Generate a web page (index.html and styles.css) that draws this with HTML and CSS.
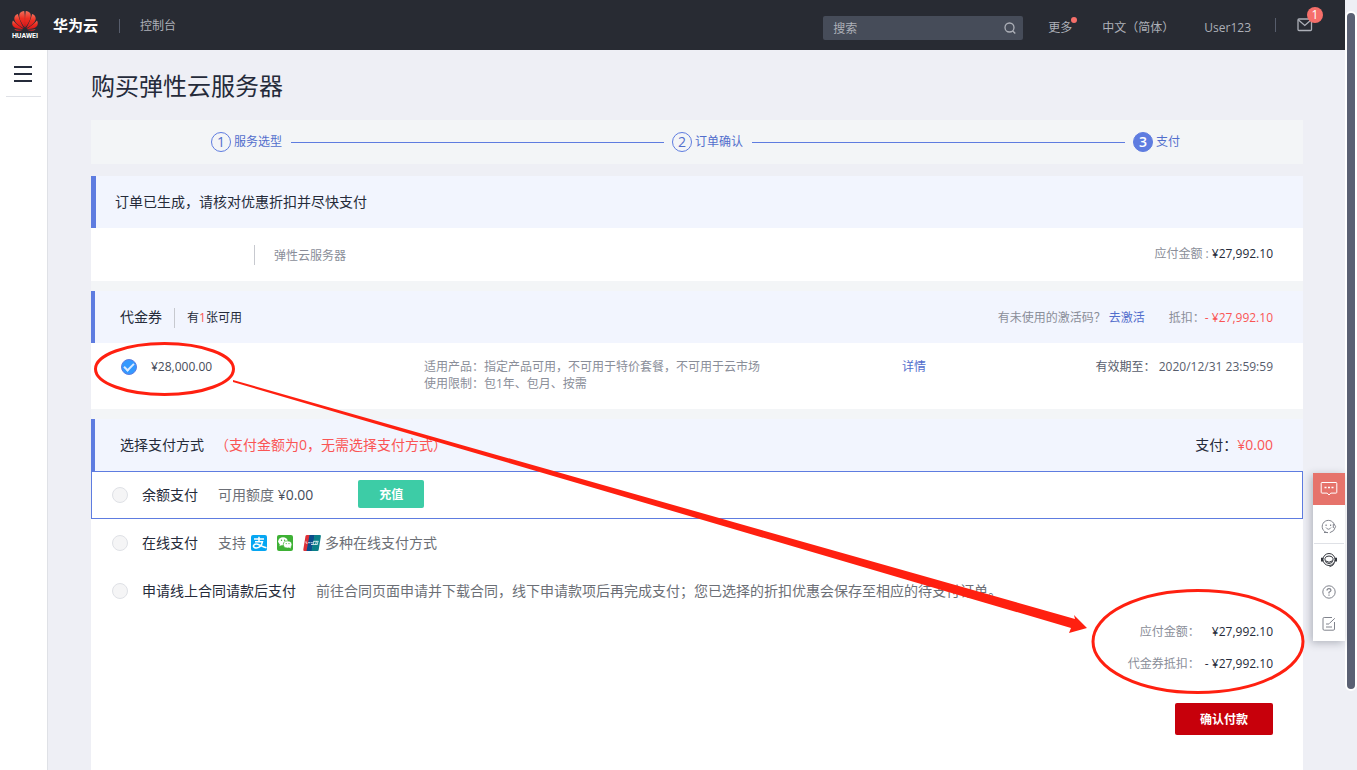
FILE: index.html
```html
<!DOCTYPE html>
<html lang="zh-CN">
<head>
  <meta charset="UTF-8">
  <meta name="viewport" content="width=device-width, initial-scale=1.0">
  <title>购买弹性云服务器 - 华为云</title>
  <link rel="stylesheet" href="styles.css">
</head>
<body>
  <div class="app">
    <header class="topbar">
      <a class="logo" href="#">
        <svg width="28" height="30" viewBox="0 0 28 30" aria-hidden="true">
          <defs>
            <linearGradient id="petal" x1="0" y1="0" x2="0" y2="1">
              <stop offset="0" stop-color="#f2705c"/>
              <stop offset="0.45" stop-color="#ee2f22"/>
              <stop offset="1" stop-color="#d8161a"/>
            </linearGradient>
          </defs>
          <g fill="url(#petal)">
            <path d="M13.700 17.500C9.500 12 7.300 7 8.600 3.500 9.600 1.800 11.300 1.100 13.200 1 14 5 14.200 12 13.700 17.500z"/>
            <path d="M14.300 17.500C18.500 12 20.700 7 19.400 3.500 18.400 1.800 16.700 1.100 14.800 1 14 5 13.800 12 14.300 17.500z"/>
            <path d="M12.800 18.200C7 15.500 3 11.800 3.300 8 3.600 5.800 5.200 4.500 6.900 4 8 9 10.500 14 12.800 18.200z"/>
            <path d="M15.200 18.200C21 15.500 25 11.800 24.700 8 24.400 5.800 22.800 4.500 21.100 4 20 9 17.500 14 15.200 18.200z"/>
            <path d="M12.300 19C7.500 19.200 3.500 18.700 1.800 15.800 .9 13.800 1.100 12 2 10.400 5 13.800 9 16.500 12.300 19z"/>
            <path d="M15.700 19C20.500 19.200 24.500 18.700 26.200 15.800 27.100 13.800 26.900 12 26 10.400 23 13.800 19 16.500 15.700 19z"/>
            <path d="M12 19.700C8.500 21.300 5 21.300 3.200 18.900 6 19.600 9 19.700 12 19.700z"/>
            <path d="M16 19.700C19.500 21.300 23 21.300 24.800 18.900 22 19.600 19 19.700 16 19.700z"/>
          </g>
          <text class="logo-text" x="14" y="28" text-anchor="middle">HUAWEI</text>
        </svg>
        <span class="brand">华为云</span>
      </a>
      <a class="console" href="#">控制台</a>
      <form class="search">
        <input type="text" placeholder="搜索" aria-label="搜索">
        <button type="button" aria-label="开始搜索">
          <svg width="12" height="12" viewBox="0 0 12 12"><circle cx="5.500" cy="5.500" r="4.500"/><path d="M8.500 8.700l2.800 2.800"/></svg>
        </button>
      </form>
      <nav class="topnav">
        <a class="more" href="#">更多</a>
        <a class="lang" href="#">中文（简体）</a>
        <a class="user" href="#">User123</a>
        <a class="mail" href="#" aria-label="消息">
          <svg width="16" height="14" viewBox="0 0 16 14"><rect x="1" y="1" width="13.500" height="11.500" rx="1"/><path d="M1.500 2l6.300 5.500L14 2"/></svg>
          <span class="badge">1</span>
        </a>
      </nav>
    </header>

    <div class="layout">
      <aside class="sidebar">
        <button class="menu-btn" type="button" aria-label="菜单"><span></span><span></span><span></span></button>
      </aside>

      <main class="main">
        <h1>购买弹性云服务器</h1>

        <ol class="steps">
          <li><span class="num">1</span>服务选型</li>
          <li><span class="num">2</span>订单确认</li>
          <li class="current"><span class="num">3</span>支付</li>
        </ol>

        <div class="content">
          <section class="block order">
            <h2 class="block-head">订单已生成，请核对优惠折扣并尽快支付</h2>
            <div class="order-row">
              <span class="product">弹性云服务器</span>
              <span class="amount">应付金额 : <b>¥27,992.10</b></span>
            </div>
          </section>

          <section class="block">
            <div class="block-head">
              <h2>代金券</h2>
              <span class="usable">有<em>1</em>张可用</span>
              <span class="code-tip">有未使用的激活码？ <a href="#">去激活</a></span>
              <span class="deduct">抵扣：<em>- ¥27,992.10</em></span>
            </div>
            <div class="voucher-row">
              <label class="voucher"><input type="checkbox" checked>¥28,000.00</label>
              <p>适用产品：指定产品可用，不可用于特价套餐，不可用于云市场<br>使用限制：包1年、包月、按需</p>
              <div class="expire"><a href="#">详情</a><span>有效期至： 2020/12/31 23:59:59</span></div>
            </div>
          </section>

          <section class="block pay">
            <div class="block-head">
              <h2>选择支付方式</h2>
              <span class="notice">（支付金额为0，无需选择支付方式）</span>
              <span class="total">支付：<em>¥0.00</em></span>
            </div>
            <div class="pay-row active">
              <label><input type="radio" name="pay" disabled>余额支付</label>
              <span class="pay-desc">可用额度 <b>¥0.00</b></span>
              <button class="recharge" type="button">充值</button>
            </div>
            <div class="pay-row">
              <label><input type="radio" name="pay" disabled>在线支付</label>
              <span class="pay-desc">支持</span>
              <span class="pay-icons">
                <svg width="16" height="16" viewBox="0 0 16 16">
                  <rect width="16" height="16" rx="2" fill="#06a6f2"/>
                  <path d="M3 4h10M8 1.800V6.500M4 6.700h7.500c-.5 2.500-2.500 6-6 6.300-2.600.1-3.800-1.700-2.500-3 1.400-1.400 3.700-.9 5.500 0 2 .9 4 2 7 2.800" fill="none" stroke="#fff" stroke-width="1.500"/>
                </svg>
                <svg width="16" height="16" viewBox="0 0 16 16">
                  <rect width="16" height="16" rx="2" fill="#3eb135"/>
                  <ellipse cx="6" cy="6.300" rx="4.800" ry="4" fill="#fff"/>
                  <path d="M3 9l-.6 2.200L5 9.800z" fill="#fff"/>
                  <ellipse cx="10.600" cy="9.500" rx="4.300" ry="3.600" fill="#fff" stroke="#3eb135" stroke-width=".7"/>
                  <path d="M12 12.300l1.800 1.200-.3-2z" fill="#fff"/>
                  <g fill="#3eb135"><circle cx="4.500" cy="5.200" r=".7"/><circle cx="7.600" cy="5.200" r=".7"/><circle cx="9.200" cy="8.600" r=".6"/><circle cx="12" cy="8.600" r=".6"/></g>
                </svg>
                <svg width="18" height="16" viewBox="0 0 18 16">
                  <path d="M4 0h3.500L4.500 16H1.500Q0 16 .3 14.500L2.500 1Q2.800 0 4 0z" fill="#e02f36"/>
                  <path d="M6.500 0h5.500L9 16H3.500z" fill="#0b4d8c"/>
                  <path d="M11.500 0H17q1 0 .9 1L15.700 14.800Q15.500 16 14.500 16H8.500z" fill="#0a7f88"/>
                  <path d="M3 6.300v1.900h1.500M5 7.700h2.500M8 7.700h1.800M10 9.500l1-3.500M12.500 9.500l1-3.500M8 9.500h6.500M10.500 6.300h5M15 6.300L14.200 9.500" stroke="#e8f4f6" stroke-width=".8" fill="none"/>
                </svg>
              </span>
              <span class="pay-desc">多种在线支付方式</span>
            </div>
            <div class="pay-row">
              <label><input type="radio" name="pay" disabled>申请线上合同请款后支付</label>
              <span class="pay-desc">前往合同页面申请并下载合同，线下申请款项后再完成支付；您已选择的折扣优惠会保存至相应的待支付订单。</span>
            </div>
            <div class="summary">
              <dl>
                <dt>应付金额：</dt><dd>¥27,992.10</dd>
                <dt>代金券抵扣：</dt><dd>- ¥27,992.10</dd>
              </dl>
              <button class="confirm" type="button">确认付款</button>
            </div>
          </section>
        </div>
      </main>
    </div>
  </div>

  <div class="scrollbar"><div class="thumb"></div></div>

  <nav class="dock">
    <a class="dock-chat" href="#" aria-label="在线咨询">
      <svg width="18" height="16" viewBox="0 0 18 16"><path d="M2 1.500h14q.8 0 .8.800v9q0 .8-.8.800h-5.200L9 14 7.200 12.100H2q-.8 0-.8-.8v-9q0-.8.8-.8z"/><path d="M4.500 6.500h2M8 6.500h2M11.500 6.500h2" stroke-width="1.600"/></svg>
    </a>
    <a class="dock-smile" href="#" aria-label="评价">
      <svg width="16" height="16" viewBox="0 0 16 16"><path d="M6.500 13.700A6.200 6.200 0 1 1 12.600 4.200L14.600 7.600 12.600 11.600 8.800 13.700M3 13.500h4M12.300 5v4"/><path d="M5 8.500q2.500 3.500 5 0"/><path d="M4.500 6.200h1.200M9 6.200h1.200" stroke-width="1.400"/></svg>
    </a>
    <a href="#" aria-label="客服">
      <svg class="dark" width="18" height="16" viewBox="0 0 18 16"><circle cx="9" cy="7.500" r="6"/><path d="M5 6.500Q5.500 4 9 4t4 2.500V8q-.5 3.500-4 3.500T5 8zM6 9q3 2.500 6 0M14.500 10.500q-1 3.500-5 4.200"/><path d="M2 5.800v3.600M16 5.800v3.600" stroke-width="2"/></svg>
    </a>
    <a href="#" aria-label="帮助">
      <svg width="16" height="16" viewBox="0 0 16 16"><circle cx="8" cy="8" r="6.200"/><path d="M6 6.600Q6 4.600 8 4.600t2 1.700Q10 7.300 8 8.300v1.200M8 10.500v1.300" stroke-width="1.200"/></svg>
    </a>
    <a href="#" aria-label="建议">
      <svg width="16" height="16" viewBox="0 0 16 16"><path d="M11 1.500H3.200Q2 1.500 2 2.700V13q0 1.200 1.200 1.200h9q1.300 0 1.300-1.200V6M5 8h3M5 11h6M8.300 7.500L13.800 2.300"/></svg>
    </a>
  </nav>

  <!-- callouts drawn over the page -->
  <svg class="marks" width="1357" height="770" viewBox="0 0 1357 770" aria-hidden="true">
    <ellipse cx="164.500" cy="369" rx="69" ry="25.500"/>
    <ellipse cx="1198" cy="641.500" rx="105" ry="51"/>
    <path d="M233 380L1075 619 1074 615 1087 628 1069 633 1071 628 233 382z"/>
  </svg>
</body>
</html>
```
FILE: styles.css
```css
* { box-sizing: border-box; }
body { font-family: "Open Sans", "Noto Sans CJK SC", sans-serif; font-size: 12px; line-height: 20px; color: #252b3a; background: #eeeff5; margin: 0; display: flex; min-height: 100vh; position: relative; }
h1, h2, p, ol, dl, dd { margin: 0; padding: 0; font-weight: normal; }
a { color: #526ecc; text-decoration: none; }
b { font-weight: normal; color: #252b3a; }
em { font-style: normal; color: #fa5555; }
button { font-family: inherit; border: none; padding: 0; cursor: pointer; }
svg { display: block; fill: none; }
.app { flex: 1; min-width: 0; display: flex; flex-direction: column; }

/* top bar */
.topbar { height: 50px; background: #282b33; display: flex; align-items: center; padding: 0 32px 0 11px; }
.topbar a { color: #adb0b8; }
.logo { display: flex; align-items: center; gap: 14px; }
.logo-text { font: bold 7px Roboto, sans-serif; fill: #fff; }
.brand { font-size: 15px; font-weight: bold; color: #fff; }
.console { margin: 2px 0 0 21px; padding-left: 20px; border-left: 1px solid #575d6c; line-height: 14px; }
.search { margin-left: auto; width: 200px; height: 24px; margin-top: 6px; background: #464c59; border-radius: 2px; display: flex; align-items: center; padding: 0 7px 0 10px; }
.search input { flex: 1; min-width: 0; background: none; border: none; outline: none; padding: 2px 0 0; font: inherit; color: #fff; }
.search input::placeholder { color: #adb0b8; opacity: 1; }
.search button { background: none; }
.search svg, .mail svg { stroke: #adb0b8; stroke-width: 1.3; }
.topnav { display: flex; align-items: center; margin: 6px 0 0 25px; }
.more { position: relative; }
.more::after { content: ""; position: absolute; top: -1px; right: -5px; width: 6px; height: 6px; border-radius: 50%; background: #f66f6a; }
.lang { margin-left: 30px; }
.user { margin-left: 30px; }
.mail { position: relative; margin: -6px 0 0 24px; padding-left: 21px; border-left: 1px solid #575d6c; }
.badge { position: absolute; top: -11px; right: -10px; width: 16px; height: 16px; border-radius: 50%; background: #f66f6a; color: #fff; line-height: 16px; text-align: center; }

.layout { flex: 1; display: flex; }
.sidebar { width: 48px; background: #fff; border-right: 1px solid #dfe1e6; padding: 0 6px; }
.menu-btn { width: 100%; height: 47px; background: none; border-bottom: 1px solid #dfe1e6; padding: 2px 2px 0 0; display: flex; flex-direction: column; justify-content: center; align-items: center; gap: 5px; }
.menu-btn span { width: 18px; height: 2px; background: #252b3a; }
.main { flex: 1; min-width: 0; padding: 0 42px 0 43px; display: flex; flex-direction: column; }
h1 { font-size: 24px; line-height: 32px; padding: 20px 0 18px; }

.steps { display: flex; align-items: center; height: 44px; padding: 0 123px 0 120px; background: #f3f5f7; list-style: none; color: #526ecc; }
.steps li { display: flex; align-items: center; flex: 1 1 auto; gap: 3px; }
.steps li::after { content: ""; flex: 1; height: 1px; margin: 0 8px 0 6px; background: #5e7ce0; }
.steps .current { flex: none; }
.steps .current::after { display: none; }
.num { width: 20px; height: 20px; border: 1px solid #5e7ce0; border-radius: 50%; font-size: 14px; line-height: 18px; text-align: center; }
.current .num { background: #5e7ce0; color: #fff; font-weight: 600; }

.content { flex: 1; margin-top: 12px; background: #f3f5f7; display: flex; flex-direction: column; gap: 10px; }
.block { background: #fff; }
.block-head { display: flex; align-items: center; height: 52px; padding: 0 30px 0 25px; background: #f2f5fe; border-left: 4px solid #5e7ce0; font-size: 12px; }
.block-head h2, .order .block-head { font-size: 14px; }
.order .block-head { border-left-width: 5px; padding-left: 19px; }
.order-row { display: flex; justify-content: space-between; align-items: flex-start; height: 53px; padding: 16px 30px 0 163px; color: #8a8e99; }
.product { margin-top: 1px; padding: 2px 0 0 19px; line-height: 18px; border-left: 1px solid #c7c9cf; }

.usable { margin: 2px 0 0 12px; padding-left: 12px; border-left: 1px solid #c7c9cf; }
.code-tip, .deduct { margin: 2px 0 0 auto; color: #8a8e99; }
.deduct { margin-left: 24px; }
.voucher-row { display: grid; grid-template-columns: 303fr 478fr 371fr; align-items: start; padding: 15px 30px 17px; line-height: 17px; color: #8a8e99; }
.voucher { display: flex; align-items: center; gap: 14px; color: #464c59; }
.voucher input { appearance: none; width: 16px; height: 16px; margin: 0; border: 1px solid #5e7ce0; border-radius: 50%; background: #3399ff; display: grid; place-items: center; }
.voucher input::after { content: ""; width: 8px; height: 4px; border: solid #dbeaff; border-width: 0 0 2px 2px; transform: translateY(-1px) rotate(-45deg); }
.expire { display: flex; justify-content: space-between; }
.expire span { color: #575d6c; }

.pay { flex: 1; }
.notice { font-size: 14px; color: #fa5555; margin-left: 11px; }
.total { margin-left: auto; font-size: 14px; }
.pay-row { display: flex; align-items: center; height: 48px; padding: 0 20px; border: 1px solid transparent; font-size: 14px; }
.pay-row.active { border-color: #5e7ce0; }
.pay-row label { display: flex; align-items: center; gap: 14px; margin-right: 20px; }
.pay-row input { appearance: none; width: 16px; height: 16px; margin: 0; border: 1px solid #dfe1e6; border-radius: 50%; background: #f5f5f6; }
.pay-desc { color: #6c6f76; }
.pay-desc b { color: #464c59; }
.recharge { margin: -3px 0 0 45px; width: 66px; height: 28px; background: #3dcca6; color: #fff; border-radius: 2px; font-size: 12px; font-weight: bold; }
.pay-icons { display: flex; gap: 10px; margin: 0 4px 0 5px; }
.summary { padding: 1px 30px 35px; display: flex; flex-direction: column; align-items: flex-end; gap: 23px; }
.summary dl { display: grid; grid-template-columns: auto auto; column-gap: 5px; line-height: 32px; text-align: right; }
.summary dt { color: #8a8e99; }
.confirm { width: 98px; height: 32px; background: #c7000b; color: #fff; border-radius: 2px; font-size: 12px; font-weight: bold; }

.scrollbar { width: 12px; padding-top: 11px; }
.thumb { height: 680px; border: 2px solid #fff; border-radius: 6px; background: #5a6073; }

/* floating tools */
.dock { position: absolute; right: 12px; top: 473px; width: 32px; padding-bottom: 1px; background: #fff; box-shadow: -2px 2px 8px rgba(37,43,58,0.3); }
.dock a { height: 32px; display: flex; align-items: center; justify-content: center; }
.dock svg { stroke: #80838c; stroke-width: 1; }
.dock svg.dark { stroke: #33363d; }
.dock .dock-chat { background: #e6736b; }
.dock-chat svg { stroke: #fff; }
.dock .dock-smile { height: 39px; margin: 0 1px; padding-top: 5px; border-bottom: 1px solid #dfe1e6; }

.marks { position: absolute; left: 0; top: 0; pointer-events: none; }
.marks ellipse { stroke: #ff2010; stroke-width: 3; }
.marks path { fill: #ff2010; }
```
